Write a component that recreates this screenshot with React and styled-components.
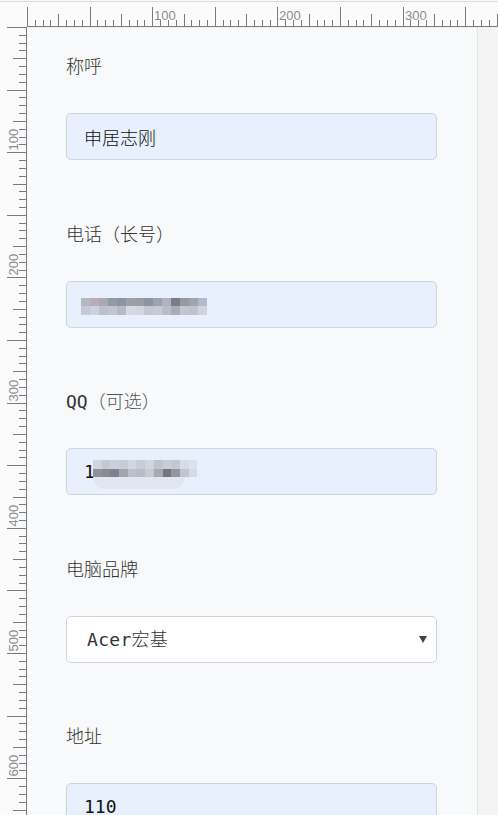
import React from 'react';
import styled, { createGlobalStyle } from 'styled-components';

// 标尺刻度：100 单位 ≈ 125px
const STEP = 7.825;
const TICK = '#7a7a7a';

const phoneMosaic = [
  ['#b4b8c4', '#b8adb6', '#a8abb4', '#9499a6', '#8f94a3', '#9ea0a8', '#9a9ea8', '#9094a0', '#9da2ad', '#aeb3bf', '#7d7d88', '#969aa3', '#a0a4ad', '#b4bace'],
  ['#c4c9d6', '#cdd2e0', '#bcc1cd', '#c1c5cf', '#b5bac6', '#d5d9e4', '#d2d6e1', '#c3c8d3', '#c6cad5', '#b8bdca', '#a9adb8', '#c2c6d0', '#bfc3cc', '#cfd4e0'],
];

const qqMosaic = [
  ['#d0d4de', '#c4c8d2', '#ccd0da', '#c8ccd6', '#d2d6e0', '#c8ccd6', '#d0d4de', '#c0c4ce', '#c8ccd6', '#c4c8d2', '#d8dce6', '#dde1eb'],
  ['#8f9099', '#8c8a90', '#7d8293', '#a4a6ae', '#bcc0ca', '#b8bcc8', '#c6cad4', '#a8aab2', '#76757e', '#94959d', '#bfc5d1', '#d6dae4'],
];

function TopRuler() {
  const ticks = [];
  for (let i = 0; 27 + i * STEP < 498; i++) {
    const x = Math.round(27 + i * STEP) + 0.5;
    const top = i % 8 === 0 ? 7 : i % 4 === 0 ? 14 : 20;
    ticks.push(<line key={i} x1={x} x2={x} y1={top} y2={26} stroke={TICK} />);
    if (i > 0 && i % 16 === 0) {
      ticks.push(
        <RulerText key={'t' + i} x={x + 1.5} y={19.5}>
          {(i / 16) * 100}
        </RulerText>
      );
    }
  }
  return (
    <TopSvg width="498" height="27">
      <line x1="0" x2="498" y1="1.5" y2="1.5" stroke="#dcdcdc" />
      <line x1="27" x2="498" y1="26.5" y2="26.5" stroke={TICK} />
      {ticks}
    </TopSvg>
  );
}

function LeftRuler() {
  const ticks = [];
  for (let i = 0; i * STEP < 788; i++) {
    const y = Math.round(i * STEP) + 0.5;
    const left = i % 8 === 0 ? 7 : i % 4 === 0 ? 13 : 19;
    ticks.push(<line key={i} x1={left} x2={27} y1={y} y2={y} stroke={TICK} />);
    if (i > 0 && i % 16 === 0) {
      ticks.push(
        <RulerText key={'t' + i} transform={`translate(17.5 ${y - 2}) rotate(-90)`}>
          {(i / 16) * 100}
        </RulerText>
      );
    }
  }
  return (
    <LeftSvg width="27" height="788">
      <line x1="26.5" x2="26.5" y1="0" y2="788" stroke={TICK} />
      {ticks}
    </LeftSvg>
  );
}

function Mosaic({ rows, cell, top, left, children }) {
  return (
    <MosaicBox $top={top} $left={left}>
      {rows.map((row, r) => (
        <MosaicRow key={r}>
          {row.map((c, k) => (
            <MosaicCell key={k} $w={cell} style={{ background: c }} />
          ))}
        </MosaicRow>
      ))}
      {children}
    </MosaicBox>
  );
}

export default function App() {
  return (
    <Page>
      <GlobalStyle />
      <TopRuler />
      <Body>
        <LeftRuler />
        <Panel>
          <Group>
            <Label>称呼</Label>
            <Field readOnly value="申居志刚" />
          </Group>

          <Group>
            <Label>电话（长号）</Label>
            <FieldWrap>
              <Field readOnly value="" />
              <Mosaic rows={phoneMosaic} cell={9} top={17} left={15} />
            </FieldWrap>
          </Group>

          <Group>
            <Label>QQ<Hint>（可选）</Hint></Label>
            <FieldWrap>
              <Field readOnly value="1" />
              <Mosaic rows={qqMosaic} cell={8.7} top={12} left={27}>
                <Haze />
              </Mosaic>
            </FieldWrap>
          </Group>

          <Group>
            <Label>电脑品牌</Label>
            <FieldWrap>
              <Select defaultValue="acer">
                <option value="acer">Acer宏基</option>
              </Select>
              <Caret width="8" height="7" viewBox="0 0 8 7">
                <path d="M0 0 H8 L4 7 Z" fill="#3f4348" />
              </Caret>
            </FieldWrap>
          </Group>

          <Group>
            <Label>地址</Label>
            <Field readOnly value="110" />
          </Group>
        </Panel>
        <Track />
      </Body>
    </Page>
  );
}

const GlobalStyle = createGlobalStyle`
  html, body {
    margin: 0;
    padding: 0;
    overflow: hidden;
    background: #fbfbfb;
  }
`;

const Page = styled.div`
  width: 498px;
  height: 815px;
  display: flex;
  flex-direction: column;
  background: #fbfbfb;
  overflow: hidden;
`;

const TopSvg = styled.svg`
  display: block;
  flex: none;
`;

const LeftSvg = styled.svg`
  display: block;
  flex: none;
`;

const RulerText = styled.text`
  font-family: 'Liberation Sans', Arial, sans-serif;
  font-size: 13px;
  fill: #8c8c8c;
`;

const Body = styled.div`
  flex: 1;
  display: flex;
  min-height: 0;
`;

// 表单面板
const Panel = styled.div`
  width: 450px;
  flex: none;
  box-sizing: border-box;
  background: #f8f9fa;
  border-top: 1px solid #eef0f2;
  padding: 27px 40px 0 39px;
  display: flex;
  flex-direction: column;
  gap: 62.5px;
  font-family: 'DejaVu Sans Mono', 'Noto Sans CJK SC', monospace;
`;

const Track = styled.div`
  flex: 1;
  background: #f3f3f3;
  border-left: 1px solid #e3e3e3;
`;

const Group = styled.div`
  display: flex;
  flex-direction: column;
  gap: 34px;
`;

const Label = styled.label`
  font-size: 18px;
  line-height: 24px;
  font-weight: 300;
  color: #333;
`;

const Hint = styled.span`
  color: #555;
`;

const FieldWrap = styled.div`
  position: relative;
`;

const Field = styled.input`
  display: block;
  width: 100%;
  height: 47px;
  box-sizing: border-box;
  margin: 0;
  padding: 0 17px;
  border: 1px solid #ced4da;
  border-radius: 5px;
  background: #e8f0fe;
  color: #111;
  font-family: 'DejaVu Sans Mono', 'Noto Sans CJK SC', monospace;
  font-size: 18px;
  font-weight: 300;
  outline: none;
`;

const Select = styled.select`
  display: block;
  width: 100%;
  height: 47px;
  box-sizing: border-box;
  margin: 0;
  padding: 0 20px;
  border: 1px solid #ced4da;
  border-radius: 5px;
  background: #fff;
  color: #333;
  font-family: 'DejaVu Sans Mono', 'Noto Sans CJK SC', monospace;
  font-size: 18px;
  font-weight: 300;
  letter-spacing: 0.3px;
  appearance: none;
  -webkit-appearance: none;
  outline: none;
`;

const Caret = styled.svg`
  position: absolute;
  right: 10px;
  top: 20px;
  pointer-events: none;
`;

// 打码区域
const MosaicBox = styled.div`
  position: absolute;
  top: ${(p) => p.$top}px;
  left: ${(p) => p.$left}px;
  display: flex;
  flex-direction: column;
`;

const MosaicRow = styled.div`
  display: flex;
  height: 8.5px;
`;

const MosaicCell = styled.div`
  width: ${(p) => p.$w}px;
  height: 100%;
`;

const Haze = styled.div`
  width: 92px;
  height: 12px;
  background: #dfe4ee;
  border-radius: 0 0 14px 14px;
  opacity: 0.8;
`;
